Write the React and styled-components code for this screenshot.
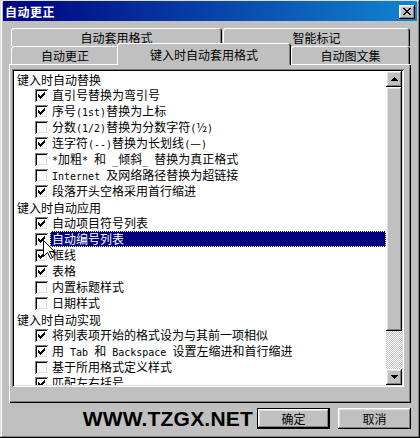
import React from 'react';
import styled, { createGlobalStyle, css } from 'styled-components';

const GlobalStyle = createGlobalStyle`
  html, body {
    margin: 0;
    padding: 0;
    background: #c0c0c0;
  }
  body {
    font-family: "Noto Sans CJK SC", "Liberation Sans", sans-serif;
    font-size: 12px;
    color: #000;
  }
`;

const raised = css`
  box-shadow: inset -1px -1px #000, inset 1px 1px #fff, inset -2px -2px #808080, inset 2px 2px #dfdfdf;
`;

const sunken = css`
  box-shadow: inset 1px 1px #808080, inset -1px -1px #fff, inset 2px 2px #000, inset -2px -2px #dfdfdf;
`;

const Window = styled.div`
  box-sizing: border-box;
  width: 420px;
  height: 438px;
  padding: 1px 3px 2px 3px;
  background: #c0c0c0;
  box-shadow: inset -1px -1px #000, inset 1px 1px #dfdfdf, inset -2px -2px #808080, inset 2px 2px #fff;
  display: flex;
  flex-direction: column;
`;

const TitleBar = styled.div`
  height: 20px;
  display: flex;
  align-items: center;
  justify-content: space-between;
  padding: 0 2px;
  background: linear-gradient(to right, #000080, #1084d0);
`;

const Title = styled.span`
  color: #fff;
  font-weight: bold;
  font-size: 12px;
  letter-spacing: 0.5px;
`;

const CloseButton = styled.div`
  width: 16px;
  height: 14px;
  margin-top: 1px;
  display: flex;
  align-items: center;
  justify-content: center;
  background: #c0c0c0;
  ${raised}
`;

const Body = styled.div`
  flex: 1;
  display: flex;
  flex-direction: column;
  padding: 7px 6px 7px 6px;
`;

const TabRow = styled.div`
  display: flex;
  height: 18px;
  align-items: flex-start;
`;

const Tab = styled.div`
  box-sizing: border-box;
  width: ${p => p.$w}px;
  height: 18px;
  margin-left: ${p => p.$ml || 0}px;
  padding-top: 1px;
  display: flex;
  align-items: center;
  justify-content: center;
  background: #c0c0c0;
  border-radius: 3px 3px 0 0;
  box-shadow: inset 1px 1px #fff, inset -1px 0 #000, inset -2px 0 #808080;
  white-space: nowrap;
  ${p => p.$selected && css`
    height: 22px;
    margin-top: -3px;
    padding-top: 0;
    position: relative;
    z-index: 1;
  `}
`;

const Panel = styled.div`
  box-sizing: border-box;
  height: 339px;
  padding: 5px 6px 16px 3px;
  box-shadow: inset 1px 1px #fff, inset -1px -1px #000, inset -2px -2px #808080;
`;

const ListBox = styled.div`
  position: relative;
  box-sizing: border-box;
  width: 392px;
  height: 318px;
  padding: 2px;
  display: flex;
  background: #fff;
  ${sunken}
`;

const List = styled.div`
  flex: 1;
  overflow: hidden;
`;

const Row = styled.div`
  height: 16px;
  display: flex;
  align-items: center;
  padding-left: ${p => (p.$heading ? 3 : 21)}px;
  white-space: nowrap;
`;

const Box = styled.div`
  box-sizing: border-box;
  flex: none;
  width: 13px;
  height: 13px;
  display: flex;
  align-items: center;
  justify-content: center;
  background: #fff;
  ${sunken}
`;

const Label = styled.span`
  flex: ${p => (p.$active ? 1 : 'none')};
  height: 16px;
  line-height: 16px;
  margin-left: 2px;
  padding: 0 2px;
  ${p => p.$active && css`
    background: #000080;
    color: #fff;
    outline: 1px dotted #ffff80;
    outline-offset: -1px;
  `}
`;

const Latin = styled.span`
  font-family: "DejaVu Sans Mono", "Liberation Mono", monospace;
  font-size: 10px;
  white-space: pre;
`;

const ScrollBar = styled.div`
  width: 16px;
  display: flex;
  flex-direction: column;
`;

const ScrollButton = styled.div`
  box-sizing: border-box;
  width: 16px;
  height: 16px;
  display: flex;
  align-items: center;
  justify-content: center;
  background: #c0c0c0;
  ${raised}
`;

const Thumb = styled.div`
  height: 244px;
  background: #c0c0c0;
  ${raised}
`;

const Track = styled.div`
  flex: 1;
  background-color: #c0c0c0;
  background-image: conic-gradient(#fff 25%, #c0c0c0 0 50%, #fff 0 75%, #c0c0c0 0);
  background-size: 2px 2px;
`;

const Cursor = styled.svg`
  position: absolute;
  left: 31px;
  top: 171px;
`;

const Footer = styled.div`
  height: 21px;
  margin-top: 5px;
  display: flex;
  align-items: center;
  justify-content: flex-end;
`;

const Watermark = styled.span`
  margin-right: 4px;
  font-family: "Liberation Sans", Arial, sans-serif;
  font-weight: bold;
  font-size: 21px;
  line-height: 21px;
  letter-spacing: 0.2px;
`;

const Button = styled.button`
  box-sizing: border-box;
  width: 73px;
  height: 21px;
  margin-left: ${p => p.$ml || 0}px;
  padding: 0;
  border: none;
  background: #c0c0c0;
  font-family: "Noto Sans CJK SC", sans-serif;
  font-size: 12px;
  color: #000;
  ${raised}
  ${p => p.$default && css`
    box-shadow: inset 0 0 0 1px #000, inset -2px -2px #000, inset 2px 2px #fff, inset -3px -3px #808080, inset 3px 3px #dfdfdf;
  `}
`;

const CHECK = [[6, 0, 1], [5, 1, 2], [0, 2, 1], [4, 2, 3], [0, 3, 2], [3, 3, 3], [0, 4, 5], [1, 5, 3], [2, 6, 1]];
const CLOSE = [[0, 0, 2], [6, 0, 2], [1, 1, 2], [5, 1, 2], [2, 2, 4], [3, 3, 2], [2, 4, 4], [1, 5, 2], [5, 5, 2], [0, 6, 2], [6, 6, 2]];

const Pixels = ({ w, h, cells }) => (
  <svg width={w} height={h} viewBox={`0 0 ${w} ${h}`} shapeRendering="crispEdges">
    {cells.map(([x, y, len], i) => <rect key={i} x={x} y={y} width={len} height={1} fill="#000" />)}
  </svg>
);

const Arrow = ({ up }) => (
  <svg width="7" height="4" viewBox="0 0 7 4" shapeRendering="crispEdges">
    {up
      ? <path d="M3 0h1v1h1v1h1v1h1v1H0V3h1V2h1V1h1z" fill="#000" />
      : <path d="M0 0h7v1H6v1H5v1H4v1H3V3H2V2H1V1H0z" fill="#000" />}
  </svg>
);

const withLatin = (text) =>
  text.split(/([\x20-\x7e]+)/).filter(Boolean).map((part, i) =>
    /^[\x20-\x7e]+$/.test(part) ? <Latin key={i}>{part}</Latin> : part);

const rows = [
  { heading: '键入时自动替换' },
  { text: '直引号替换为弯引号', on: true },
  { text: '序号(1st)替换为上标', on: true },
  { text: '分数(1/2)替换为分数字符(½)', on: false },
  { text: '连字符(--)替换为长划线(—)', on: true },
  { text: '*加粗* 和 _倾斜_ 替换为真正格式', on: false },
  { text: 'Internet 及网络路径替换为超链接', on: false },
  { text: '段落开头空格采用首行缩进', on: true },
  { heading: '键入时自动应用' },
  { text: '自动项目符号列表', on: true },
  { text: '自动编号列表', on: true, active: true },
  { text: '框线', on: true },
  { text: '表格', on: true },
  { text: '内置标题样式', on: false },
  { text: '日期样式', on: false },
  { heading: '键入时自动实现' },
  { text: '将列表项开始的格式设为与其前一项相似', on: true },
  { text: '用 Tab 和 Backspace 设置左缩进和首行缩进', on: true },
  { text: '基于所用格式定义样式', on: false },
  { text: '匹配左右括号', on: true },
];

const App = () => (
  <>
    <GlobalStyle />
    <Window>
      <TitleBar>
        <Title>自动更正</Title>
        <CloseButton>
          <Pixels w={8} h={7} cells={CLOSE} />
        </CloseButton>
      </TitleBar>
      <Body>
        <TabRow>
          <Tab $w={211} $ml={2}>自动套用格式</Tab>
          <Tab $w={187} $ml={1}>智能标记</Tab>
        </TabRow>
        <TabRow>
          <Tab $w={108} $ml={2}>自动更正</Tab>
          <Tab $w={174} $ml={-2} $selected>键入时自动套用格式</Tab>
          <Tab $w={119}>自动图文集</Tab>
        </TabRow>
        <Panel>
          <ListBox>
            <List>
              {rows.map((r, i) =>
                r.heading ? (
                  <Row key={i} $heading>{r.heading}</Row>
                ) : (
                  <Row key={i}>
                    <Box>{r.on && <Pixels w={7} h={7} cells={CHECK} />}</Box>
                    <Label $active={r.active}>{withLatin(r.text)}</Label>
                  </Row>
                )
              )}
            </List>
            <ScrollBar>
              <ScrollButton><Arrow up /></ScrollButton>
              <Thumb />
              <Track />
              <ScrollButton><Arrow /></ScrollButton>
            </ScrollBar>
            <Cursor width="12" height="19" viewBox="0 0 12 19">
              <path d="M0.5 0.5V16.5L4.5 12.5L7.5 18.5L9.5 17.5L6.5 11.5H11.5Z" fill="#fff" stroke="#000" strokeWidth="1" />
            </Cursor>
          </ListBox>
        </Panel>
        <Footer>
          <Watermark>WWW.TZGX.NET</Watermark>
          <Button $default>确定</Button>
          <Button $ml={8}>取消</Button>
        </Footer>
      </Body>
    </Window>
  </>
);

export default App;
